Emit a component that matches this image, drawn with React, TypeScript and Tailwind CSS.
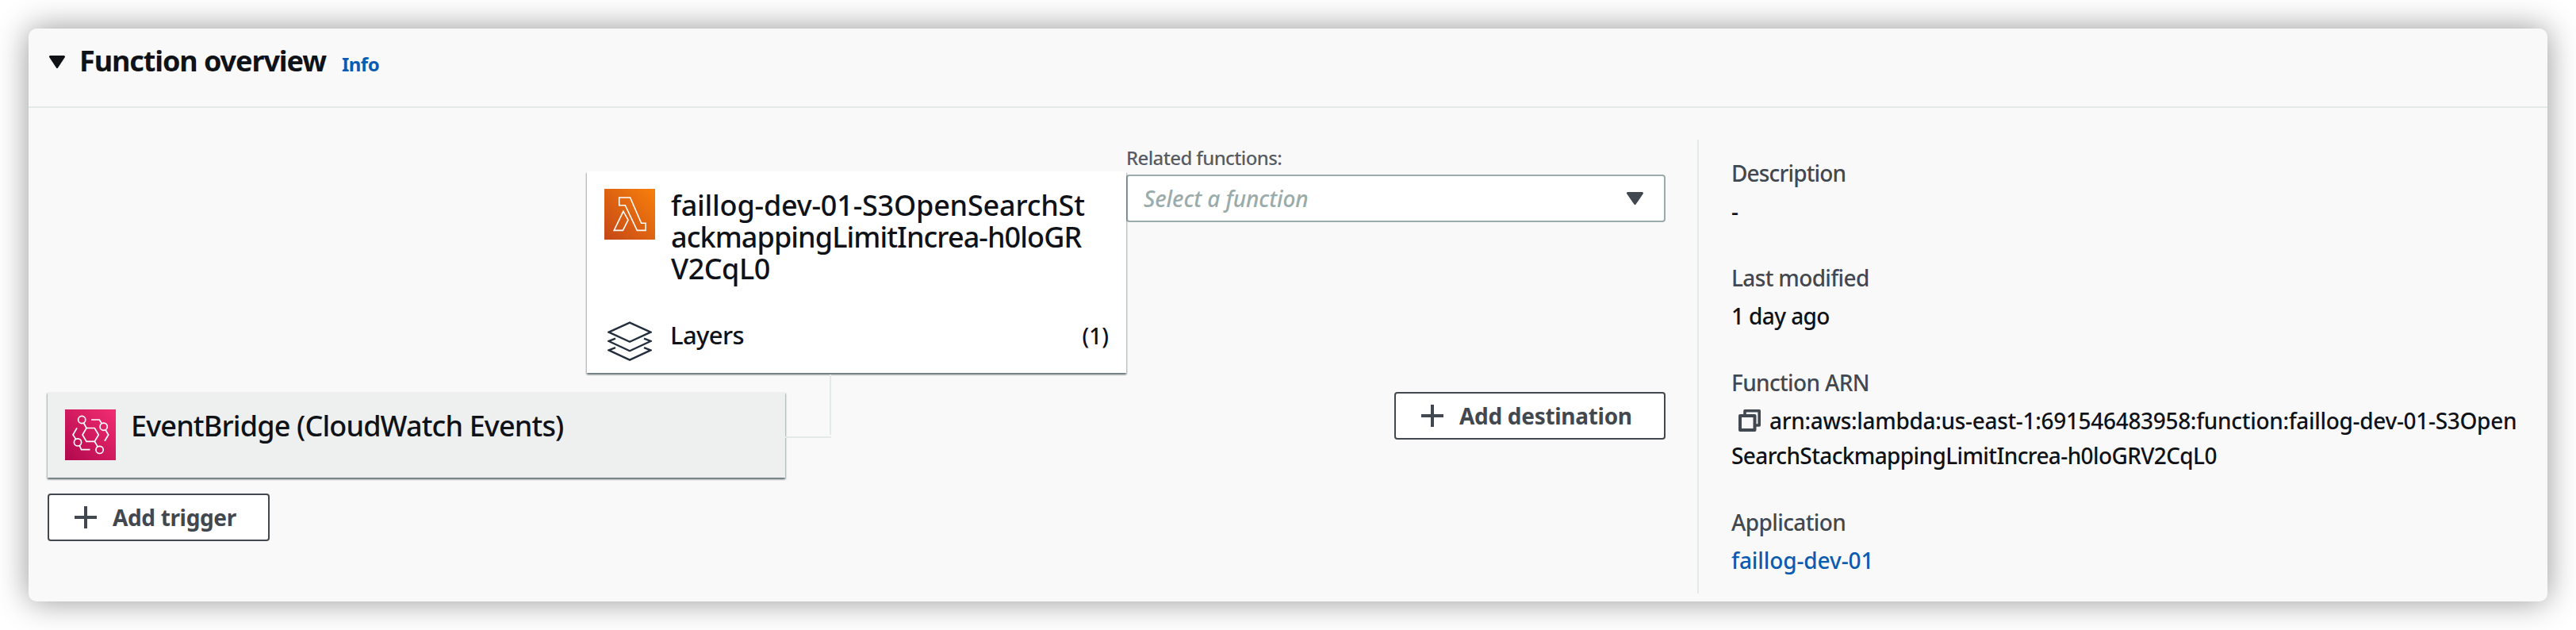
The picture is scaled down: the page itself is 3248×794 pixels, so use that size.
import type { ReactNode } from "react";

function LambdaIcon() {
  return (
    <svg className="size-16 shrink-0" viewBox="0 0 64 64" fill="none" stroke="#fff" strokeWidth="1.6">
      <defs>
        <linearGradient id="lambda-bg" x1="0" y1="64" x2="64" y2="0" gradientUnits="userSpaceOnUse">
          <stop offset="0" stopColor="#c44717" />
          <stop offset="1" stopColor="#f8800b" />
        </linearGradient>
      </defs>
      <rect width="64" height="64" fill="url(#lambda-bg)" stroke="none" />
      <path d="M18.7 11H32.6L46.6 43.3H52V52.4H41.3L26.3 20.7H18.7Z" />
      <path d="M23.9 28.3L30 39.2L23.4 52.4H12.2Z" />
    </svg>
  );
}

function EventBridgeIcon() {
  return (
    <svg className="size-16 shrink-0" viewBox="0 0 64 64" fill="none" stroke="#fff" strokeWidth="1.7">
      <defs>
        <linearGradient id="bridge-bg" x1="0" y1="64" x2="64" y2="0" gradientUnits="userSpaceOnUse">
          <stop offset="0" stopColor="#b0084d" />
          <stop offset="1" stopColor="#f32d71" />
        </linearGradient>
      </defs>
      <rect width="64" height="64" fill="url(#bridge-bg)" stroke="none" />
      <path d="M27 23.5H37.3L42.3 32L37.3 40.4H27L22 32Z" />
      <circle cx="21.2" cy="13" r="4.6" />
      <circle cx="48.7" cy="21.7" r="4.6" />
      <circle cx="16" cy="41.4" r="4.6" />
      <circle cx="43.6" cy="50.9" r="4.6" />
      <path d="M23.5 17L27 23.5M37.3 40.4L41.2 47" />
      <path d="M33 13H43.3L46.3 17.8M51 25.7L54.7 32L50 39.8" />
      <path d="M15 23.4L10 32L13.6 37.4M18.3 45.4L20.5 50.7H31.5" />
    </svg>
  );
}

function LayersIcon() {
  return (
    <svg className="h-[50px] w-[56px] shrink-0" viewBox="0 0 56 50" fill="none" stroke="#232f3e" strokeWidth="2.4">
      <path d="M28 1.6L54.4 13.7L28 25.8L1.6 13.7Z" />
      <path d="M10 21.7L1.6 25L28 37.3L54.4 25L46 21.7" />
      <path d="M10 33.2L1.6 36.4L28 48.6L54.4 36.4L46 33.2" />
    </svg>
  );
}

function CopyIcon() {
  return (
    <svg className="size-7 shrink-0" viewBox="0 0 28 28" fill="none" stroke="#424850" strokeLinejoin="round">
      <path d="M8 6V1.8H26.2V20H22" strokeWidth="3.6" />
      <rect x="2" y="8" width="18.5" height="18" strokeWidth="4" />
    </svg>
  );
}

function Caret({ className }: { className: string }) {
  return (
    <svg className={className} viewBox="0 0 21 16" preserveAspectRatio="none">
      <path d="M1.5 1.5H19.5L10.5 14.5Z" fill="currentColor" stroke="currentColor" strokeWidth="3" strokeLinejoin="round" />
    </svg>
  );
}

function AddButton({ className, label }: { className: string; label: ReactNode }) {
  return (
    <button
      className={`flex h-[60px] items-center gap-5 rounded-[4px] border-2 border-[#424850] bg-white pl-8 text-[28px] font-bold whitespace-nowrap text-[#424850] ${className}`}
    >
      <svg className="size-7 shrink-0" viewBox="0 0 28 28" stroke="currentColor" strokeWidth="4">
        <path d="M14 0V28M0 14H28" />
      </svg>
      <span className="pb-[1px] leading-[40px]">{label}</span>
    </button>
  );
}

function Field({ label, spacing, children }: { label: string; spacing: string; children: ReactNode }) {
  return (
    <div>
      <div className={`mb-1 text-[#424850] ${spacing}`}>{label}</div>
      {children}
    </div>
  );
}

const tileShadow =
  "shadow-[0_2px_2px_0_rgba(0,28,36,0.4),1px_2px_2px_0_rgba(0,28,36,0.2),-1px_2px_2px_0_rgba(0,28,36,0.2)]";

export default function App() {
  return (
    <div className="h-[794px] w-[3248px] overflow-hidden bg-white p-9 font-['Noto_Sans',sans-serif] font-medium text-[#0f1217]">
      <section className="h-[722px] w-[3176px] rounded-[10px] bg-[#f9f9f9] shadow-[0_0_40px_rgba(0,0,0,0.42)]">
        <header className="flex h-[100px] items-start border-b-2 border-[#e4e9e9] pt-[18px] pl-[26px]">
          <Caret className="mt-[16px] h-[16px] w-[20px]" />
          <div className="ml-[18px] flex items-baseline gap-[20px] leading-[45px] font-bold whitespace-nowrap">
            <h2 className="text-[36px] tracking-[-1.1px]">Function overview</h2>
            <a className="text-[24px] tracking-[-0.5px] text-[#0a5cb0]">Info</a>
          </div>
        </header>

        <div className="flex pt-10 pl-6">
          <div className="w-[2040px]">
            <div className="grid h-[294px] grid-cols-3">
              <div />
              <div className={`relative mt-10 h-[254px] bg-white px-[22px] pt-[22px] ${tileShadow}`}>
                <div className="flex h-[164px] gap-5">
                  <LambdaIcon />
                  <div className="pt-[1px] text-[36px] leading-[40px] whitespace-nowrap">
                    <div className="tracking-[-0.2px]">faillog-dev-01-S3OpenSearchSt</div>
                    <div className="tracking-[-0.92px]">ackmappingLimitIncrea-h0loGR</div>
                    <div className="tracking-[-0.5px]">V2CqL0</div>
                  </div>
                </div>
                <div className="flex items-start pl-1">
                  <div className="pt-[3px]">
                    <LayersIcon />
                  </div>
                  <div className="ml-[23px] flex flex-1 items-baseline justify-between leading-[41px]">
                    <span className="text-[31px] tracking-[-0.6px]">Layers</span>
                    <span className="text-[28px]">(1)</span>
                  </div>
                </div>
              </div>
              <div>
                <div className="h-[44px] text-[24px] leading-[45px] tracking-[-0.62px] text-[#555c66]">Related functions:</div>
                <div className="flex h-[60px] items-center justify-between rounded-[4px] border-2 border-[#9aabab] bg-white pr-[26px] pl-5">
                  <span className="pb-[1px] text-[28px] leading-[40px] tracking-[-0.1px] text-[#9aabab] italic">
                    Select a function
                  </span>
                  <Caret className="h-[16px] w-[21px] text-[#424850]" />
                </div>
              </div>
            </div>

            <div className="mt-6 flex h-[108px] items-start justify-between">
              <div className={`relative flex h-[108px] w-[930px] gap-[19px] bg-[#eef0ef] p-[22px] ${tileShadow}`}>
                <EventBridgeIcon />
                <span className="pt-[1px] text-[36px] leading-[40px] tracking-[-0.85px] whitespace-nowrap">
                  EventBridge (CloudWatch Events)
                </span>
                <div className="absolute top-[56px] left-[930px] h-[2px] w-[58px] bg-[#e4e9e9]" />
                <div className="absolute top-[-22px] left-[986px] h-[76px] w-[2px] bg-[#e4e9e9]" />
              </div>
              <AddButton className="w-[342px]" label={<span className="tracking-[-0.3px]">Add destination</span>} />
            </div>

            <AddButton className="mt-5 w-[280px]" label={<span className="tracking-[-0.35px]">Add trigger</span>} />
          </div>

          <aside className="ml-10 flex h-[572px] flex-col gap-10 border-l-2 border-[#e4e9e9] pt-[20px] pl-[41px] text-[28px] leading-[44px] whitespace-nowrap">
            <Field label="Description" spacing="tracking-[-0.85px]">
              <div>-</div>
            </Field>
            <Field label="Last modified" spacing="tracking-[-0.65px]">
              <div className="tracking-[-0.6px]">1 day ago</div>
            </Field>
            <Field label="Function ARN" spacing="tracking-[-0.65px]">
              <div className="flex items-center pl-[9px]">
                <CopyIcon />
                <span className="ml-[11px] tracking-[-0.32px]">
                  arn:aws:lambda:us-east-1:691546483958:function:faillog-dev-01-S3Open
                </span>
              </div>
              <div className="tracking-[-0.62px]">SearchStackmappingLimitIncrea-h0loGRV2CqL0</div>
            </Field>
            <Field label="Application" spacing="tracking-[-0.6px]">
              <a className="block tracking-[-0.1px] text-[#0a5cb0]">faillog-dev-01</a>
            </Field>
          </aside>
        </div>
      </section>
    </div>
  );
}
